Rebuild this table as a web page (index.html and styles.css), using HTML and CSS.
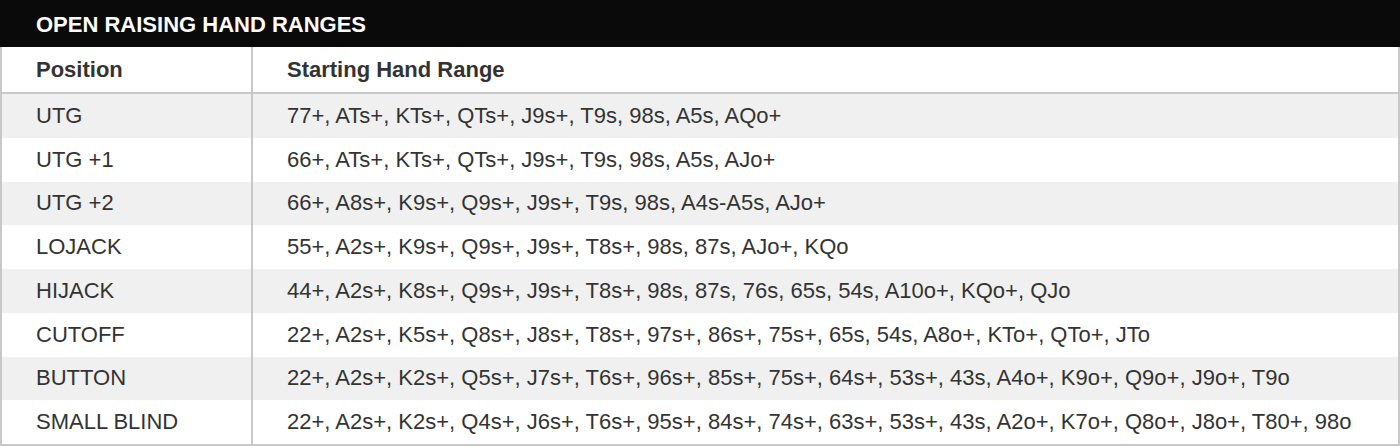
FILE: index.html
```html
<!DOCTYPE html>
<html lang="en">
<head>
<meta charset="utf-8">
<title>Open Raising Hand Ranges</title>
<link rel="stylesheet" href="styles.css">
</head>
<body>
<section class="ranges">
  <h2 class="title">OPEN RAISING HAND RANGES</h2>
  <div class="table">
    <div class="row head"><div class="cell">Position</div><div class="cell">Starting Hand Range</div></div>
    <div class="row odd"><div class="cell">UTG</div><div class="cell">77+, ATs+, KTs+, QTs+, J9s+, T9s, 98s, A5s, AQo+</div></div>
    <div class="row"><div class="cell">UTG +1</div><div class="cell">66+, ATs+, KTs+, QTs+, J9s+, T9s, 98s, A5s, AJo+</div></div>
    <div class="row odd"><div class="cell">UTG +2</div><div class="cell">66+, A8s+, K9s+, Q9s+, J9s+, T9s, 98s, A4s-A5s, AJo+</div></div>
    <div class="row"><div class="cell">LOJACK</div><div class="cell">55+, A2s+, K9s+, Q9s+, J9s+, T8s+, 98s, 87s, AJo+, KQo</div></div>
    <div class="row odd"><div class="cell">HIJACK</div><div class="cell">44+, A2s+, K8s+, Q9s+, J9s+, T8s+, 98s, 87s, 76s, 65s, 54s, A10o+, KQo+, QJo</div></div>
    <div class="row"><div class="cell">CUTOFF</div><div class="cell">22+, A2s+, K5s+, Q8s+, J8s+, T8s+, 97s+, 86s+, 75s+, 65s, 54s, A8o+, KTo+, QTo+, JTo</div></div>
    <div class="row odd"><div class="cell">BUTTON</div><div class="cell">22+, A2s+, K2s+, Q5s+, J7s+, T6s+, 96s+, 85s+, 75s+, 64s+, 53s+, 43s, A4o+, K9o+, Q9o+, J9o+, T9o</div></div>
    <div class="row"><div class="cell">SMALL BLIND</div><div class="cell">22+, A2s+, K2s+, Q4s+, J6s+, T6s+, 95s+, 84s+, 74s+, 63s+, 53s+, 43s, A2o+, K7o+, Q8o+, J8o+, T80+, 98o</div></div>
  </div>
</section>
</body>
</html>
```

FILE: styles.css
```css
* { box-sizing: border-box; }
html, body { margin: 0; padding: 0; background: #fff; }
body { font-family: "Liberation Sans", Arial, Helvetica, sans-serif; color: #333; }

.ranges { width: 1400px; }

.title {
  margin: 0;
  height: 47px;
  background: #0a0a0a;
  color: #fff;
  font-size: 22px;
  font-weight: bold;
  line-height: 50px;
  padding-left: 36px;
}

.table {
  border: 2px solid #c8c8c8;
  border-top: none;
}

.row {
  display: grid;
  grid-template-columns: 249px 1fr;
  height: 43.75px;
  background: #fff;
}
.row.odd { background: #f0f0f0; }

.row.head {
  height: 47px;
  border-bottom: 2px solid #c8c8c8;
  font-weight: bold;
}

.cell {
  display: flex;
  align-items: center;
  padding-left: 34px;
  font-size: 22px;
  white-space: nowrap;
}
.row.head .cell { padding-top: 1px; }
.cell + .cell { border-left: 2px solid #c8c8c8; }
```
